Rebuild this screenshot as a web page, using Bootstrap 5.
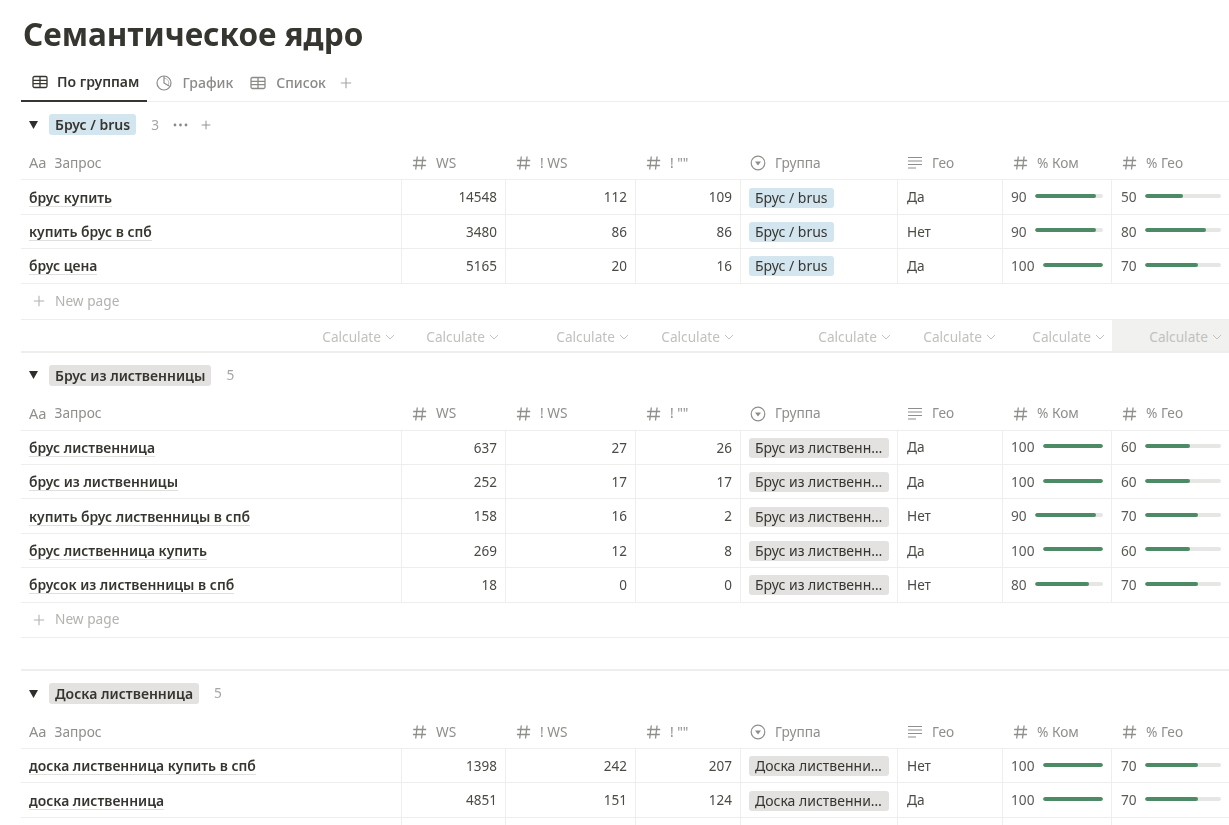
<!DOCTYPE html>
<html lang="ru">
<head>
<meta charset="utf-8">
<title>Семантическое ядро</title>
<link href="https://cdn.jsdelivr.net/npm/bootstrap@5.3.0/dist/css/bootstrap.min.css" rel="stylesheet">
<style>
html,body{height:825px;overflow:hidden;background:#fff}
body{font-family:"Noto Sans","Open Sans","Liberation Sans",sans-serif;font-size:13.7px;color:#37352f}
.sheet{padding-left:21px;width:1229px;filter:blur(.3px)}
.page-title{font-family:"Noto Sans",sans-serif;font-size:31.5px;font-weight:700;line-height:40px;height:66.4px;margin:0;padding:14px 0 0 2px;color:#37352f}
.tabbar{height:36px;border-bottom:1px solid #eeeeed}
.tabitem{height:36px;padding:0 8px 3px 9px;color:#8b8a86;font-size:14px;font-weight:500;gap:10px}
.tabitem.on{color:#37352f;font-weight:600;border-bottom:2px solid #37352f;padding-left:11px;gap:9px}
.tabitem svg,.hicon{flex:none}
.tab-plus{color:#a5a4a0;margin-left:6px;height:33px}
.grouphead{height:45px;padding-left:8px}
.tri{width:9px;height:8px;margin-right:11px;flex:none}
.chip{display:inline-block;padding:0 6px;border-radius:3px;line-height:20px;height:20px;font-size:14px;white-space:nowrap;overflow:hidden}
.chip-wide{width:141px}
.grouphead .chip{font-weight:600;height:21px;line-height:21px}
.tone-blue{background:#d3e5ef}
.tone-grey{background:#e3e2e0}
.cnt{color:#a6a5a2;margin-left:15px;width:7px}
.gicons{color:#8b8a86;gap:13px;margin-left:15px}
.hrow,.drow,.calcrow{display:flex;width:1208px}
.hrow{height:33px;border-bottom:1px solid #eeeeed;color:#8f8e8a}
.drow{height:34.4px;border-bottom:1px solid #eeeeed}
.c1{width:381px}.c2{width:104px}.c3{width:130px}.c4{width:105px}.c5{width:157px}.c6{width:105px}.c7{width:109px}.c8{width:117px}
.hrow>div{display:flex;align-items:center;gap:9px;padding-left:9px;flex:none}
.hrow>.c1{padding-left:8px;gap:8px}
.drow>div{display:flex;align-items:center;flex:none;padding:1px 8px 0;border-right:1px solid #eeeeed;min-width:0}
.drow>div:last-child{border-right:0;padding-left:9px}
.drow .num{justify-content:flex-end;padding-right:8px;color:#4b4a45;font-size:13.5px}
.drow .geo{color:#4b4a45;padding-left:9px}
.qname{font-weight:600;border-bottom:1px solid rgba(55,53,47,.16);line-height:17px;font-size:13.9px}
.barcell{gap:8px;color:#5a5955}
.track{flex:1 1 auto;height:4px;border-radius:2px;background:#e6e6e4;margin-top:-3px;overflow:hidden}
.fill{height:4px;border-radius:2px;background:#4d8a66}
.newrow{height:36px;border-bottom:1px solid #eeeeed;color:#b3b2af;padding-left:12px;gap:10px;width:1208px}
.newrow.short{height:35.5px}
.calcrow{height:33px;border-bottom:2px solid #eeeeed}
.calcrow>div{display:flex;align-items:center;justify-content:flex-end;gap:4px;padding:4px 7px 0 0;flex:none;color:#c2c1be;font-size:13.7px}
.calcrow>.hot{background:#f1f1ef}
.spacer{height:33px;border-bottom:2px solid #eeeeed;width:1208px}
.aa{color:#8f8e8a;font-size:14.6px}
</style>
</head>
<body>
<svg width="0" height="0" class="position-absolute">
  <symbol id="i-table" viewBox="0 0 16 16"><path d="M2.5 2.5h11a1.5 1.5 0 0 1 1.5 1.5v8a1.5 1.5 0 0 1-1.5 1.5h-11A1.5 1.5 0 0 1 1 12V4a1.5 1.5 0 0 1 1.5-1.5zM1 6.3h14M1 9.7h14M8 2.5v11" fill="none" stroke="currentColor" stroke-width="1.3"/></symbol>
  <symbol id="i-chart" viewBox="0 0 16 16"><circle cx="8" cy="8" r="7" fill="none" stroke="currentColor" stroke-width="1.2"/><path d="M8 1.2V8l5 3" fill="none" stroke="currentColor" stroke-width="1.2"/><path d="M8 3.2a4.8 4.8 0 0 1 4.2 7" fill="none" stroke="currentColor" stroke-width=".6"/></symbol>
  <symbol id="i-plus" viewBox="0 0 12 12"><path d="M6 .8v10.4M.8 6h10.4" fill="none" stroke="currentColor" stroke-width="1.1"/></symbol>
  <symbol id="i-hash" viewBox="0 0 16 16"><path d="M6.3 1.5 4.7 14.5M12.1 1.5 10.5 14.5M2.2 5.5h13M1.9 10.5h13" fill="none" stroke="currentColor" stroke-width="1.3"/></symbol>
  <symbol id="i-select" viewBox="0 0 16 16"><circle cx="8" cy="8" r="6.8" fill="none" stroke="currentColor" stroke-width="1.2"/><path d="M5 6.5h6L8 10.6z" fill="currentColor"/></symbol>
  <symbol id="i-text" viewBox="0 0 16 16"><path d="M1 2.5h14M1 6h14M1 9.5h14M1 13h8" fill="none" stroke="currentColor" stroke-width="1.2"/></symbol>
  <symbol id="i-chev" viewBox="0 0 10 6"><path d="M1 1l4 4 4-4" fill="none" stroke="currentColor" stroke-width="1"/></symbol>
  <symbol id="i-tri" viewBox="0 0 9 8"><path d="M0 0h9L4.5 8z" fill="#2f2e2a"/></symbol>
  <symbol id="i-dots" viewBox="0 0 15 4"><circle cx="2" cy="2" r="1.4" fill="currentColor"/><circle cx="7.5" cy="2" r="1.4" fill="currentColor"/><circle cx="13" cy="2" r="1.4" fill="currentColor"/></symbol>
</svg>

<main class="sheet">
  <h1 class="page-title">Семантическое ядро</h1>
  <nav class="tabbar d-flex align-items-start">
    <div class="tabitem on d-flex align-items-center"><svg width="16" height="16"><use href="#i-table"/></svg>По группам</div>
    <div class="tabitem d-flex align-items-center"><svg width="16" height="16"><use href="#i-chart"/></svg>График</div>
    <div class="tabitem d-flex align-items-center"><svg width="16" height="16"><use href="#i-table"/></svg>Список</div>
    <div class="tab-plus d-flex align-items-center"><svg width="12" height="12"><use href="#i-plus"/></svg></div>
  </nav>

  <!-- group 1 -->
  <section>
    <div class="grouphead d-flex align-items-center">
      <svg class="tri"><use href="#i-tri"/></svg>
      <span class="chip tone-blue">Брус / brus</span>
      <span class="cnt">3</span>
      <span class="gicons d-flex align-items-center"><svg width="15" height="4"><use href="#i-dots"/></svg><svg width="10" height="10"><use href="#i-plus"/></svg></span>
    </div>
    <div class="hrow">
      <div class="c1"><span class="aa">Aa</span>Запрос</div>
      <div class="c2"><svg class="hicon" width="16" height="16"><use href="#i-hash"/></svg>WS</div>
      <div class="c3"><svg class="hicon" width="16" height="16"><use href="#i-hash"/></svg>! WS</div>
      <div class="c4"><svg class="hicon" width="16" height="16"><use href="#i-hash"/></svg>! ""</div>
      <div class="c5"><svg class="hicon" width="16" height="16"><use href="#i-select"/></svg>Группа</div>
      <div class="c6"><svg class="hicon" width="16" height="16"><use href="#i-text"/></svg>Гео</div>
      <div class="c7"><svg class="hicon" width="16" height="16"><use href="#i-hash"/></svg>% Ком</div>
      <div class="c8"><svg class="hicon" width="16" height="16"><use href="#i-hash"/></svg>% Гео</div>
    </div>
    <div class="drow">
      <div class="c1"><span class="qname">брус купить</span></div><div class="c2 num">14548</div><div class="c3 num">112</div><div class="c4 num">109</div>
      <div class="c5"><span class="chip tone-blue">Брус / brus</span></div><div class="c6 geo">Да</div>
      <div class="c7 barcell">90<div class="track"><div class="fill" style="width:90%"></div></div></div>
      <div class="c8 barcell">50<div class="track"><div class="fill" style="width:50%"></div></div></div>
    </div>
    <div class="drow">
      <div class="c1"><span class="qname">купить брус в спб</span></div><div class="c2 num">3480</div><div class="c3 num">86</div><div class="c4 num">86</div>
      <div class="c5"><span class="chip tone-blue">Брус / brus</span></div><div class="c6 geo">Нет</div>
      <div class="c7 barcell">90<div class="track"><div class="fill" style="width:90%"></div></div></div>
      <div class="c8 barcell">80<div class="track"><div class="fill" style="width:80%"></div></div></div>
    </div>
    <div class="drow">
      <div class="c1"><span class="qname">брус цена</span></div><div class="c2 num">5165</div><div class="c3 num">20</div><div class="c4 num">16</div>
      <div class="c5"><span class="chip tone-blue">Брус / brus</span></div><div class="c6 geo">Да</div>
      <div class="c7 barcell">100<div class="track"><div class="fill" style="width:100%"></div></div></div>
      <div class="c8 barcell">70<div class="track"><div class="fill" style="width:70%"></div></div></div>
    </div>
    <div class="newrow d-flex align-items-center"><svg width="12" height="12"><use href="#i-plus"/></svg>New page</div>
    <div class="calcrow">
      <div class="c1">Calculate<svg width="10" height="6"><use href="#i-chev"/></svg></div>
      <div class="c2">Calculate<svg width="10" height="6"><use href="#i-chev"/></svg></div>
      <div class="c3">Calculate<svg width="10" height="6"><use href="#i-chev"/></svg></div>
      <div class="c4">Calculate<svg width="10" height="6"><use href="#i-chev"/></svg></div>
      <div class="c5">Calculate<svg width="10" height="6"><use href="#i-chev"/></svg></div>
      <div class="c6">Calculate<svg width="10" height="6"><use href="#i-chev"/></svg></div>
      <div class="c7">Calculate<svg width="10" height="6"><use href="#i-chev"/></svg></div>
      <div class="c8 hot">Calculate<svg width="10" height="6"><use href="#i-chev"/></svg></div>
    </div>
  </section>

  <!-- group 2 -->
  <section>
    <div class="grouphead d-flex align-items-center">
      <svg class="tri"><use href="#i-tri"/></svg>
      <span class="chip tone-grey">Брус из лиственницы</span>
      <span class="cnt">5</span>
    </div>
    <div class="hrow">
      <div class="c1"><span class="aa">Aa</span>Запрос</div>
      <div class="c2"><svg class="hicon" width="16" height="16"><use href="#i-hash"/></svg>WS</div>
      <div class="c3"><svg class="hicon" width="16" height="16"><use href="#i-hash"/></svg>! WS</div>
      <div class="c4"><svg class="hicon" width="16" height="16"><use href="#i-hash"/></svg>! ""</div>
      <div class="c5"><svg class="hicon" width="16" height="16"><use href="#i-select"/></svg>Группа</div>
      <div class="c6"><svg class="hicon" width="16" height="16"><use href="#i-text"/></svg>Гео</div>
      <div class="c7"><svg class="hicon" width="16" height="16"><use href="#i-hash"/></svg>% Ком</div>
      <div class="c8"><svg class="hicon" width="16" height="16"><use href="#i-hash"/></svg>% Гео</div>
    </div>
    <div class="drow">
      <div class="c1"><span class="qname">брус лиственница</span></div><div class="c2 num">637</div><div class="c3 num">27</div><div class="c4 num">26</div>
      <div class="c5"><span class="chip chip-wide tone-grey">Брус из лиственн…</span></div><div class="c6 geo">Да</div>
      <div class="c7 barcell">100<div class="track"><div class="fill" style="width:100%"></div></div></div>
      <div class="c8 barcell">60<div class="track"><div class="fill" style="width:60%"></div></div></div>
    </div>
    <div class="drow">
      <div class="c1"><span class="qname">брус из лиственницы</span></div><div class="c2 num">252</div><div class="c3 num">17</div><div class="c4 num">17</div>
      <div class="c5"><span class="chip chip-wide tone-grey">Брус из лиственн…</span></div><div class="c6 geo">Да</div>
      <div class="c7 barcell">100<div class="track"><div class="fill" style="width:100%"></div></div></div>
      <div class="c8 barcell">60<div class="track"><div class="fill" style="width:60%"></div></div></div>
    </div>
    <div class="drow">
      <div class="c1"><span class="qname">купить брус лиственницы в спб</span></div><div class="c2 num">158</div><div class="c3 num">16</div><div class="c4 num">2</div>
      <div class="c5"><span class="chip chip-wide tone-grey">Брус из лиственн…</span></div><div class="c6 geo">Нет</div>
      <div class="c7 barcell">90<div class="track"><div class="fill" style="width:90%"></div></div></div>
      <div class="c8 barcell">70<div class="track"><div class="fill" style="width:70%"></div></div></div>
    </div>
    <div class="drow">
      <div class="c1"><span class="qname">брус лиственница купить</span></div><div class="c2 num">269</div><div class="c3 num">12</div><div class="c4 num">8</div>
      <div class="c5"><span class="chip chip-wide tone-grey">Брус из лиственн…</span></div><div class="c6 geo">Да</div>
      <div class="c7 barcell">100<div class="track"><div class="fill" style="width:100%"></div></div></div>
      <div class="c8 barcell">60<div class="track"><div class="fill" style="width:60%"></div></div></div>
    </div>
    <div class="drow">
      <div class="c1"><span class="qname">брусок из лиственницы в спб</span></div><div class="c2 num">18</div><div class="c3 num">0</div><div class="c4 num">0</div>
      <div class="c5"><span class="chip chip-wide tone-grey">Брус из лиственн…</span></div><div class="c6 geo">Нет</div>
      <div class="c7 barcell">80<div class="track"><div class="fill" style="width:80%"></div></div></div>
      <div class="c8 barcell">70<div class="track"><div class="fill" style="width:70%"></div></div></div>
    </div>
    <div class="newrow short d-flex align-items-center"><svg width="12" height="12"><use href="#i-plus"/></svg>New page</div>
    <div class="spacer"></div>
  </section>

  <!-- group 3 -->
  <section>
    <div class="grouphead d-flex align-items-center">
      <svg class="tri"><use href="#i-tri"/></svg>
      <span class="chip tone-grey">Доска лиственница</span>
      <span class="cnt">5</span>
    </div>
    <div class="hrow">
      <div class="c1"><span class="aa">Aa</span>Запрос</div>
      <div class="c2"><svg class="hicon" width="16" height="16"><use href="#i-hash"/></svg>WS</div>
      <div class="c3"><svg class="hicon" width="16" height="16"><use href="#i-hash"/></svg>! WS</div>
      <div class="c4"><svg class="hicon" width="16" height="16"><use href="#i-hash"/></svg>! ""</div>
      <div class="c5"><svg class="hicon" width="16" height="16"><use href="#i-select"/></svg>Группа</div>
      <div class="c6"><svg class="hicon" width="16" height="16"><use href="#i-text"/></svg>Гео</div>
      <div class="c7"><svg class="hicon" width="16" height="16"><use href="#i-hash"/></svg>% Ком</div>
      <div class="c8"><svg class="hicon" width="16" height="16"><use href="#i-hash"/></svg>% Гео</div>
    </div>
    <div class="drow">
      <div class="c1"><span class="qname">доска лиственница купить в спб</span></div><div class="c2 num">1398</div><div class="c3 num">242</div><div class="c4 num">207</div>
      <div class="c5"><span class="chip chip-wide tone-grey">Доска лиственни…</span></div><div class="c6 geo">Нет</div>
      <div class="c7 barcell">100<div class="track"><div class="fill" style="width:100%"></div></div></div>
      <div class="c8 barcell">70<div class="track"><div class="fill" style="width:70%"></div></div></div>
    </div>
    <div class="drow">
      <div class="c1"><span class="qname">доска лиственница</span></div><div class="c2 num">4851</div><div class="c3 num">151</div><div class="c4 num">124</div>
      <div class="c5"><span class="chip chip-wide tone-grey">Доска лиственни…</span></div><div class="c6 geo">Да</div>
      <div class="c7 barcell">100<div class="track"><div class="fill" style="width:100%"></div></div></div>
      <div class="c8 barcell">70<div class="track"><div class="fill" style="width:70%"></div></div></div>
    </div>
    <div class="drow">
      <div class="c1"></div><div class="c2 num"></div><div class="c3 num"></div><div class="c4 num"></div>
      <div class="c5"><span class="chip chip-wide tone-grey"></span></div><div class="c6 geo"></div><div class="c7"></div><div class="c8"></div>
    </div>
  </section>
</main>
<script src="https://cdn.jsdelivr.net/npm/bootstrap@5.3.0/dist/js/bootstrap.bundle.min.js"></script>
</body>
</html>
